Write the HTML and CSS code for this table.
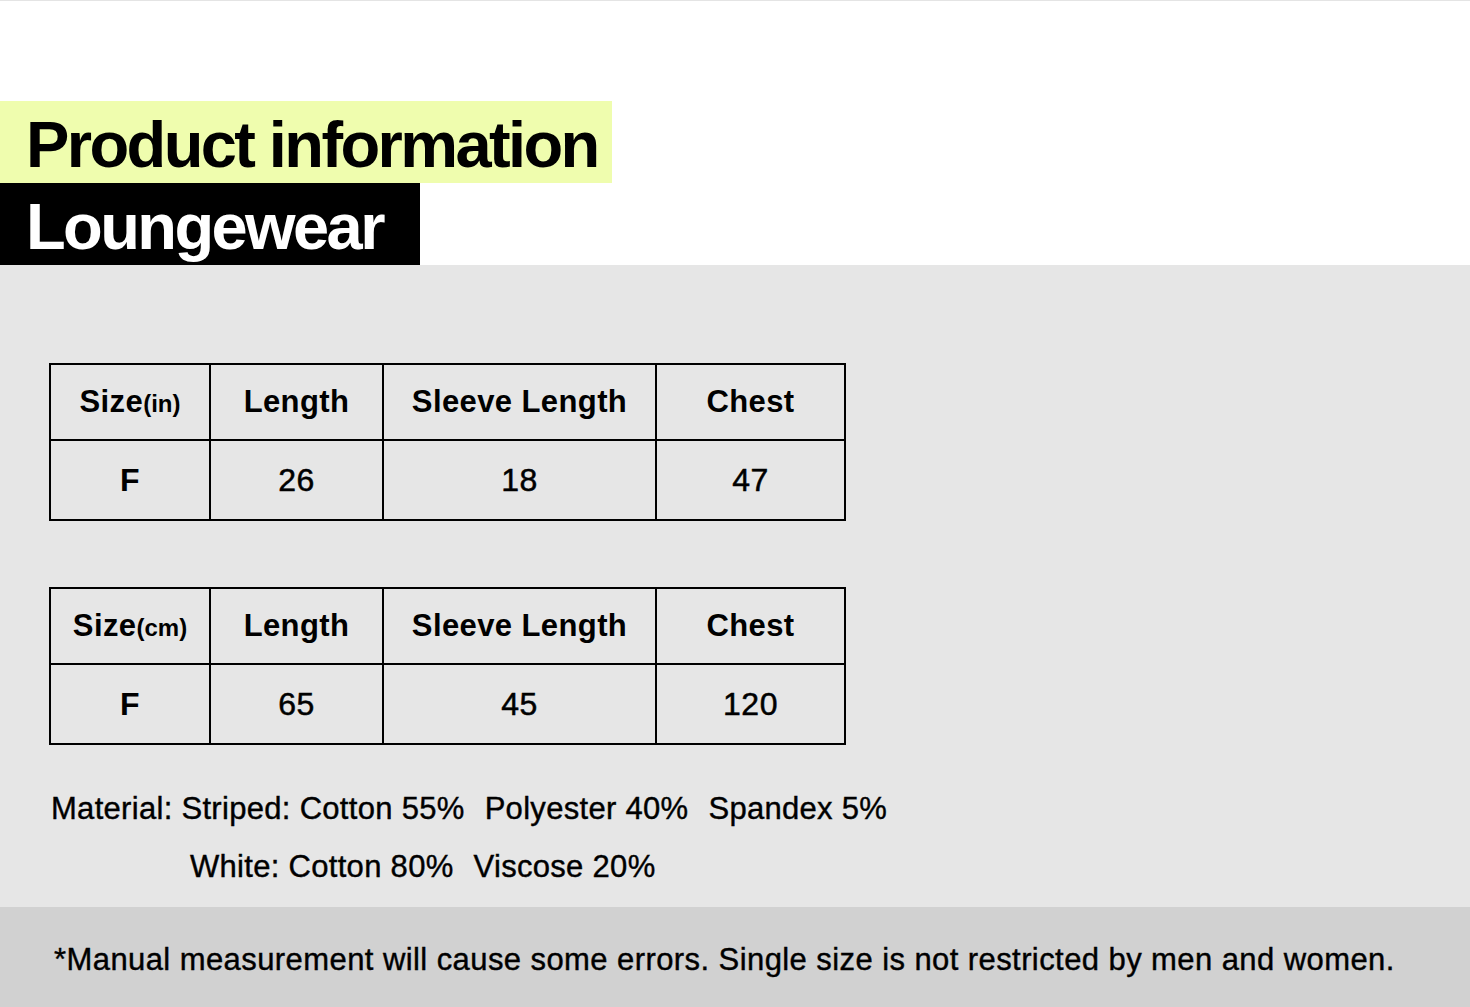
FILE: index.html
```html
<!DOCTYPE html>
<html lang="en">
<head>
<meta charset="utf-8">
<title>Product information - Loungewear</title>
<link rel="stylesheet" href="styles.css">
</head>
<body>
<header class="hero">
  <h1 class="title title-main">Product information</h1>
  <h2 class="title title-sub">Loungewear</h2>
</header>
<main class="info">
  <table class="size-table">
    <tr class="head">
      <th class="c1">Size<small>(in)</small></th>
      <th class="c2">Length</th>
      <th class="c3">Sleeve Length</th>
      <th class="c4">Chest</th>
    </tr>
    <tr class="body">
      <td class="size">F</td>
      <td>26</td>
      <td>18</td>
      <td>47</td>
    </tr>
  </table>
  <table class="size-table">
    <tr class="head">
      <th class="c1">Size<small>(cm)</small></th>
      <th class="c2">Length</th>
      <th class="c3">Sleeve Length</th>
      <th class="c4">Chest</th>
    </tr>
    <tr class="body">
      <td class="size">F</td>
      <td>65</td>
      <td>45</td>
      <td>120</td>
    </tr>
  </table>
  <div class="material">
    <p class="mat-line"><span>Material: Striped: Cotton 55%</span><span>Polyester 40%</span><span>Spandex 5%</span></p>
    <p class="mat-line indent"><span>White: Cotton 80%</span><span>Viscose 20%</span></p>
  </div>
</main>
<footer class="note">
  <p>*Manual measurement will cause some errors. Single size is not restricted by men and women.</p>
</footer>
</body>
</html>
```

FILE: styles.css
```css
* { box-sizing: border-box; }
html, body { margin: 0; padding: 0; }
body {
  font-family: "Liberation Sans", Arial, sans-serif;
  color: #000;
  background: #fff;
  width: 1470px;
}
.hero {
  border-top: 1px solid #e4e4e4;
  padding-top: 100px;
  background: #fff;
}
.title {
  margin: 0;
  font-size: 65px;
  font-weight: 700;
  letter-spacing: -2.6px;
  line-height: 82px;
  height: 82px;
  padding: 3px 0 0 26px;
  white-space: nowrap;
  overflow: visible;
}
.title-main {
  width: 612px;
  background: #effdae;
  color: #000;
}
.title-sub {
  width: 420px;
  background: #000;
  color: #fff;
}
.info {
  background: #e6e6e6;
  padding: 98px 0 0 49px;
  height: 642px;
}
.size-table {
  border-collapse: collapse;
  width: 795px;
  margin-bottom: 66px;
  table-layout: fixed;
}
.size-table th, .size-table td {
  border: 2px solid #000;
  text-align: center;
  padding: 0;
  white-space: nowrap;
}
.size-table th {
  font-size: 31px;
  font-weight: 700;
  letter-spacing: 0.4px;
  height: 76px;
}
.size-table td {
  height: 80px;
  font-size: 32px;
  font-weight: 400;
  letter-spacing: 0.5px;
  -webkit-text-stroke: 0.5px #000;
}
.size-table td.size {
  font-weight: 700;
  -webkit-text-stroke: 0;
}
.size-table small {
  font-size: 24px;
  letter-spacing: 0;
}
.c1 { width: 160px; }
.c2 { width: 173px; }
.c3 { width: 273px; }
.c4 { width: 189px; }
.material {
  margin-top: -31px;
}
.mat-line {
  margin: 0;
  display: flex;
  gap: 20px;
  font-size: 31px;
  letter-spacing: 0.3px;
  line-height: 58px;
  padding-left: 2px;
  -webkit-text-stroke: 0.4px #000;
}
.mat-line.indent {
  padding-left: 141px;
}
.note {
  background: #d1d1d1;
  height: 100px;
  display: flex;
  align-items: center;
  padding: 6px 0 0 54px;
}
.note p {
  margin: 0;
  font-size: 31px;
  letter-spacing: 0.42px;
  white-space: nowrap;
  -webkit-text-stroke: 0.4px #000;
}
```
